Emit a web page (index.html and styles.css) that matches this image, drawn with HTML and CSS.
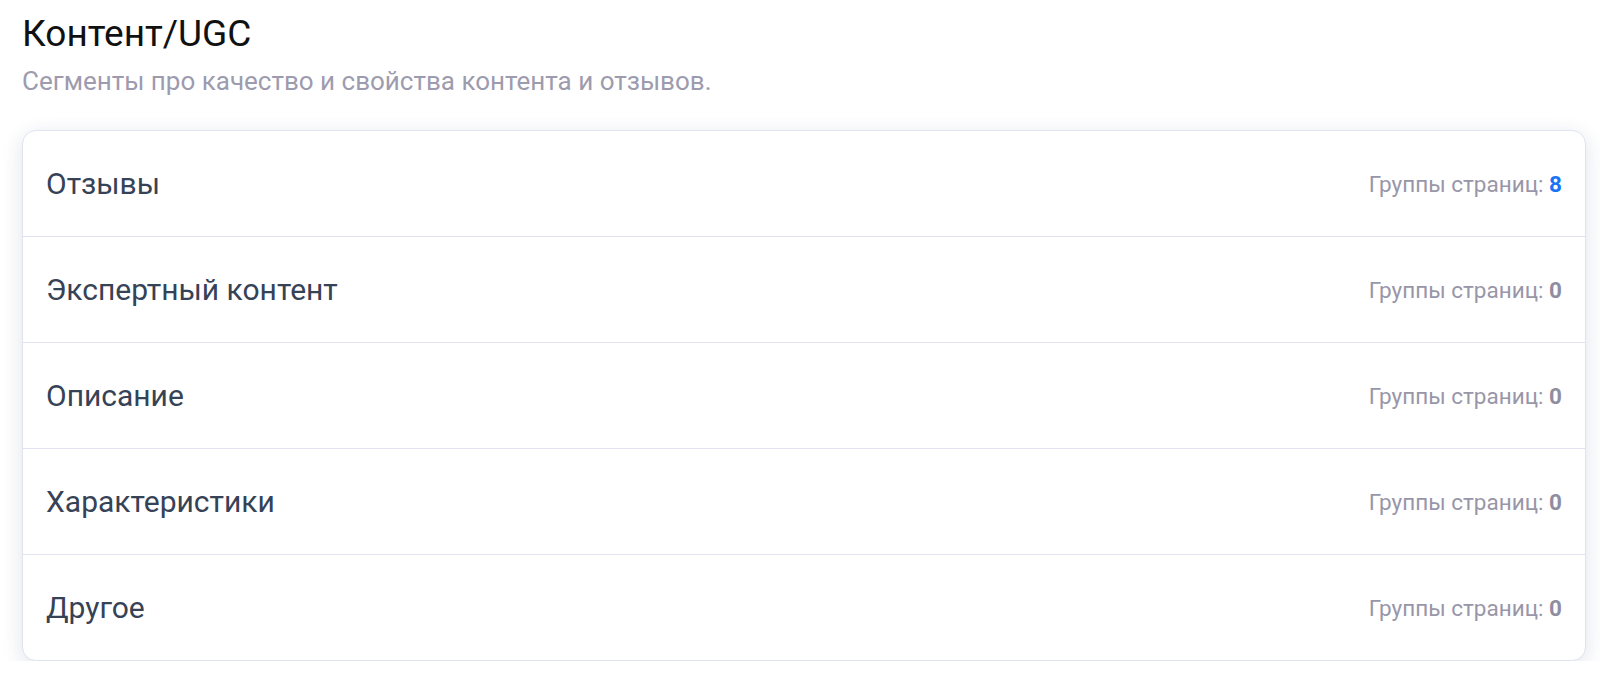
FILE: index.html
```html
<!DOCTYPE html>
<html lang="ru">
<head>
<meta charset="utf-8">
<title>Контент/UGC</title>
<link rel="stylesheet" href="styles.css">
</head>
<body>
<main class="page">
  <h1 class="title">Контент/UGC</h1>
  <p class="subtitle">Сегменты про качество и свойства контента и отзывов.</p>
  <section class="card">
    <div class="row"><span class="label">Отзывы</span><span class="meta">Группы страниц: <b class="count active">8</b></span></div>
    <div class="row"><span class="label">Экспертный контент</span><span class="meta">Группы страниц: <b class="count">0</b></span></div>
    <div class="row"><span class="label">Описание</span><span class="meta">Группы страниц: <b class="count">0</b></span></div>
    <div class="row"><span class="label">Характеристики</span><span class="meta">Группы страниц: <b class="count">0</b></span></div>
    <div class="row"><span class="label">Другое</span><span class="meta">Группы страниц: <b class="count">0</b></span></div>
  </section>
</main>
</body>
</html>
```

FILE: styles.css
```css
* { box-sizing: border-box; }
html, body { margin: 0; padding: 0; background: #ffffff; }
body { font-family: Roboto, "Noto Sans", "Liberation Sans", sans-serif; }
.page { padding: 13px 14px 0 22px; }
.title {
  margin: 0;
  font-size: 37px;
  font-weight: 400;
  line-height: 42px;
  color: #111111;
}
.subtitle {
  margin: 11px 0 0 0;
  font-size: 26px;
  line-height: 30px;
  color: #9d9bae;
}
.card {
  margin-top: 34px;
  background: #fff;
  border: 1px solid #dfe3f0;
  border-radius: 14px;
  box-shadow: 0 5px 20px rgba(40, 55, 110, 0.14);
  overflow: hidden;
}
.row {
  height: 106px;
  display: flex;
  align-items: center;
  justify-content: space-between;
  padding: 0 23px;
  border-top: 1px solid #e1e4f0;
}
.row:first-child { border-top: none; height: 105px; }
.label { font-size: 30px; color: #364256; }
.meta { font-size: 22.5px; color: #9896a8; }
.count { font-weight: 700; color: #8f8da0; }
.count.active { color: #1a73f5; }
```
